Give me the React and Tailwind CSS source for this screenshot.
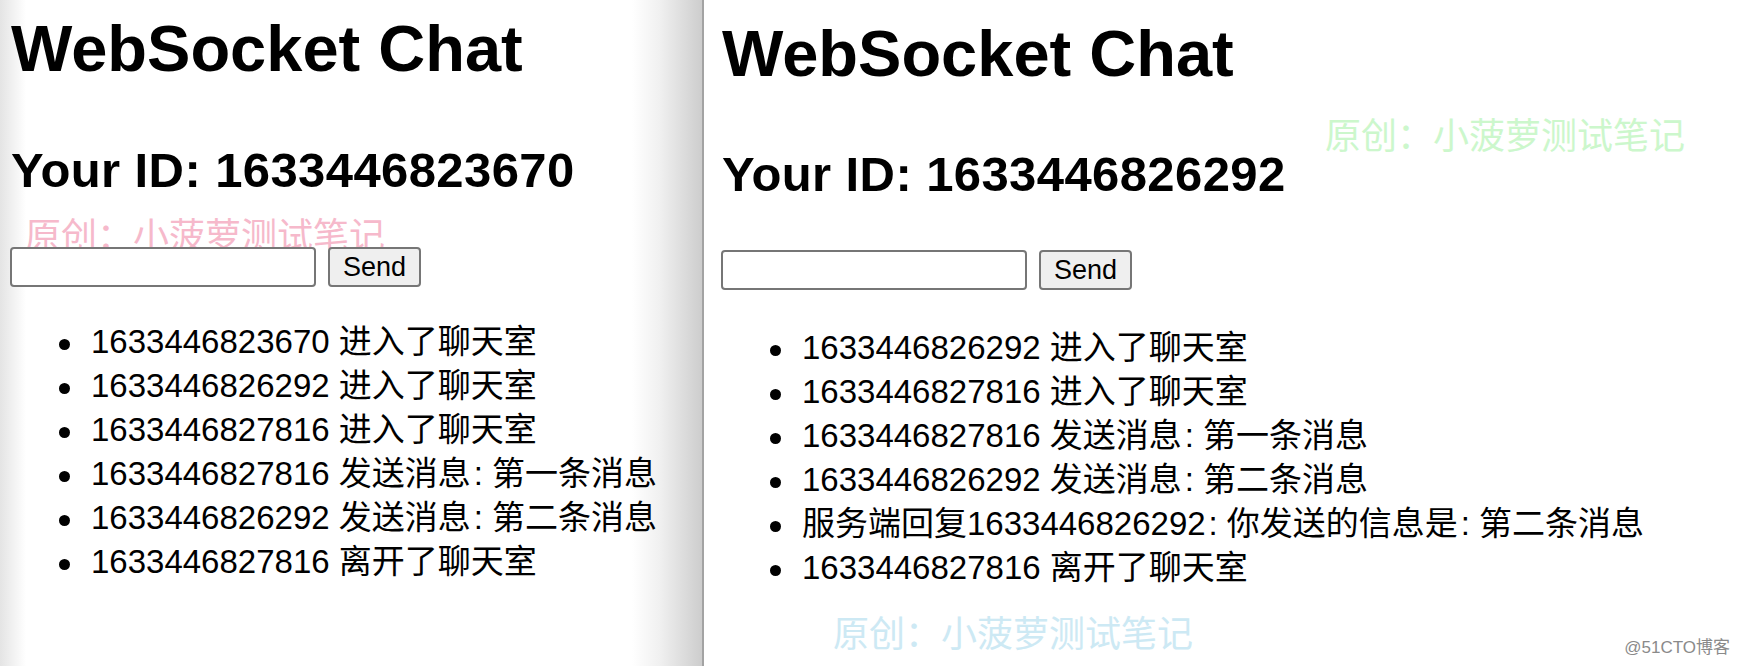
import React from "react";

const leftItems = [
  ["1633446823670 进入了聊天室"],
  ["1633446826292 进入了聊天室"],
  ["1633446827816 进入了聊天室"],
  ["1633446827816 发送消息", "第一条消息"],
  ["1633446826292 发送消息", "第二条消息"],
  ["1633446827816 离开了聊天室"],
];

const rightItems = [
  ["1633446826292 进入了聊天室"],
  ["1633446827816 进入了聊天室"],
  ["1633446827816 发送消息", "第一条消息"],
  ["1633446826292 发送消息", "第二条消息"],
  ["服务端回复1633446826292", "你发送的信息是", "第二条消息"],
  ["1633446827816 离开了聊天室"],
];

const FONT = { fontFamily: '"Liberation Sans", "Noto Sans CJK SC", Arial, sans-serif' };

function Line({ parts }) {
  return (
    <span className="leading-[44px] whitespace-nowrap">
      {parts.map((p, i) => (
        <React.Fragment key={i}>
          {i > 0 && <span className="ml-[3px] mr-[9px]">:</span>}
          {p}
        </React.Fragment>
      ))}
    </span>
  );
}

function Chat({ id, items, variant }) {
  const left = variant === "left";
  return (
    <div className={left ? "pl-[10px] pt-[17px]" : "pl-[17px] pt-[22px]"}>
      <h1 className="text-[65px] leading-[64px] font-bold text-black ml-[1px] whitespace-nowrap">
        WebSocket Chat
      </h1>
      <h2
        className={
          "text-[49px] leading-[48px] tracking-[0.4px] font-bold text-black ml-[1px] whitespace-nowrap " +
          (left ? "mt-[65px]" : "mt-[64px]")
        }
      >
        Your ID: {id}
      </h2>
      <div className={"flex items-center " + (left ? "mt-[53px]" : "mt-[52px]")}>
        <input
          type="text"
          className="relative z-10 w-[306px] h-[40px] border-2 border-[#767676] rounded-[4px] bg-white outline-none"
        />
        <button className="relative z-10 ml-[12px] w-[93px] h-[40px] bg-[#efefef] border-2 border-[#767676] rounded-[4px] text-[27px] leading-none text-black">
          Send
        </button>
      </div>
      <ul className={"list-none " + (left ? "mt-[33px]" : "mt-[36px]")}>
        {items.map((parts, i) => (
          <li key={i} className="flex items-center h-[44px] text-[33px] text-black">
            <span className="block w-[11px] h-[11px] rounded-full bg-black ml-[49px] mr-[21px] mt-[4px] shrink-0" />
            <Line parts={parts} />
          </li>
        ))}
      </ul>
    </div>
  );
}

export default function App() {
  return (
    <div
      className="relative flex w-[1750px] h-[666px] bg-white overflow-hidden"
      style={FONT}
    >
      <div className="relative w-[702px] h-full shrink-0 bg-[linear-gradient(to_right,#e4e4e4_0px,#ffffff_26px,#ffffff_632px,#f0f0f0_660px,#cdcdcd_702px)]">
        <div className="absolute left-[25px] top-[219px] text-[36px] leading-[36px] text-[#f6b9cb] whitespace-nowrap pointer-events-none">
          原创：小菠萝测试笔记
        </div>
        <Chat id="1633446823670" items={leftItems} variant="left" />
      </div>
      <div className="w-[2px] h-full shrink-0 bg-[#a3a3a3]" />
      <div className="relative flex-1 h-full bg-white">
        <div className="absolute left-[621px] top-[119px] text-[36px] leading-[36px] text-[#ccf7cc] whitespace-nowrap pointer-events-none">
          原创：小菠萝测试笔记
        </div>
        <Chat id="1633446826292" items={rightItems} variant="right" />
        <div className="absolute left-[129px] top-[617px] text-[36px] leading-[36px] text-[#cde9f4] whitespace-nowrap pointer-events-none">
          原创：小菠萝测试笔记
        </div>
        <div className="absolute right-[20px] top-[638px] text-[17px] leading-[20px] text-[#8a8a8a] whitespace-nowrap">
          @51CTO博客
        </div>
      </div>
    </div>
  );
}
